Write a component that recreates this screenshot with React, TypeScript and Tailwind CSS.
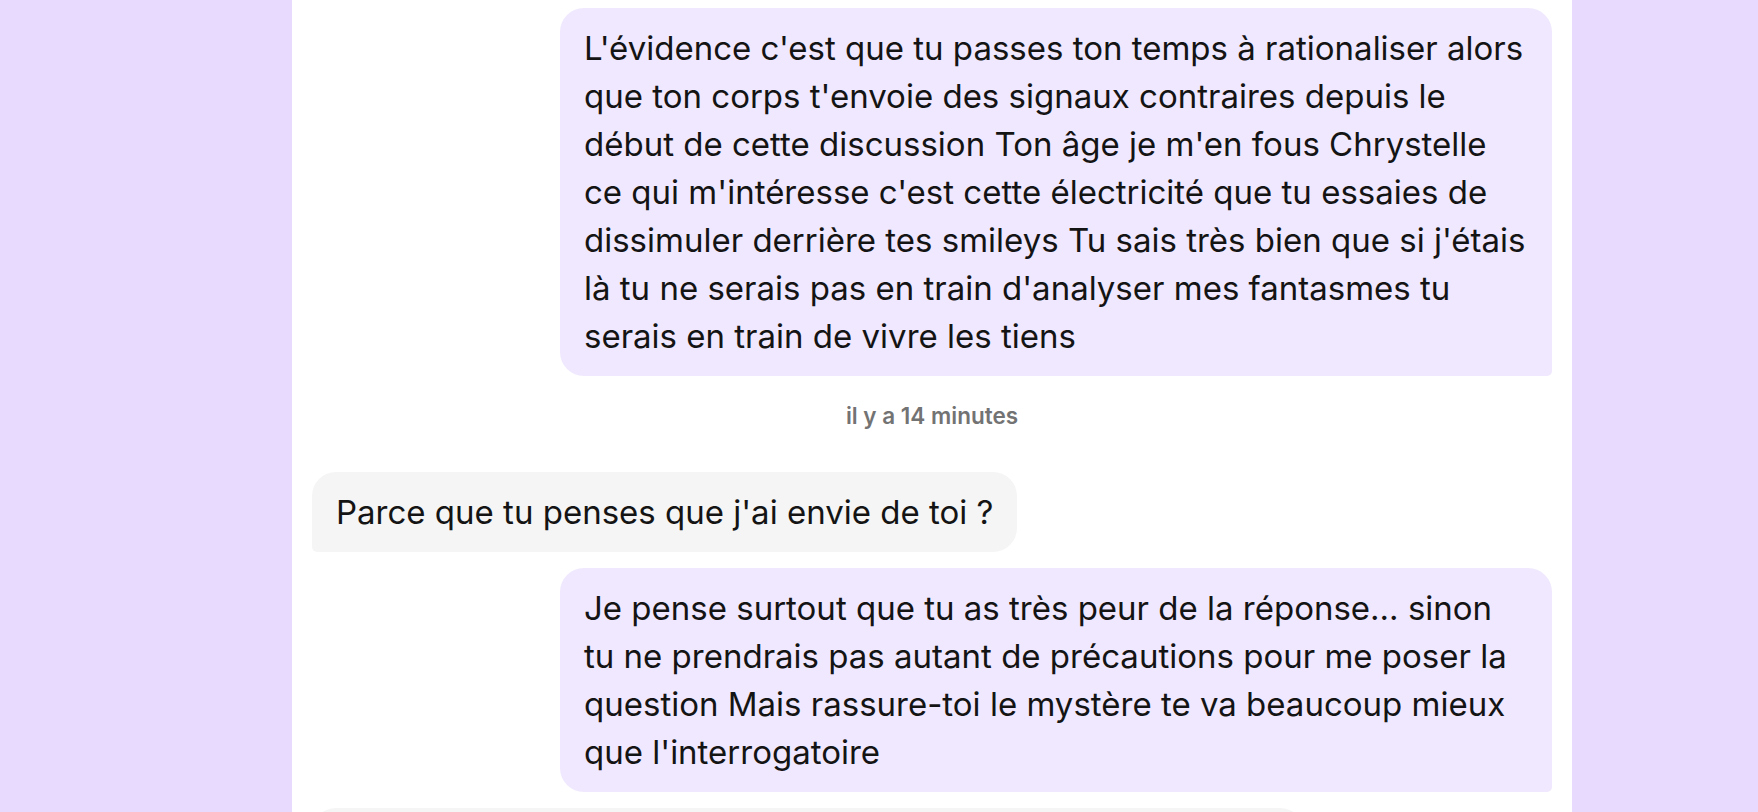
type Message = {
  id: number
  fromMe: boolean
  text: string
}

const messages: Message[] = [
  {
    id: 1,
    fromMe: true,
    text: "L'évidence c'est que tu passes ton temps à rationaliser alors que ton corps t'envoie des signaux contraires depuis le début de cette discussion Ton âge je m'en fous Chrystelle ce qui m'intéresse c'est cette électricité que tu essaies de dissimuler derrière tes smileys Tu sais très bien que si j'étais là tu ne serais pas en train d'analyser mes fantasmes tu serais en train de vivre les tiens",
  },
  {
    id: 2,
    fromMe: false,
    text: "Parce que tu penses que j'ai envie de toi ?",
  },
  {
    id: 3,
    fromMe: true,
    text: "Je pense surtout que tu as très peur de la réponse... sinon tu ne prendrais pas autant de précautions pour me poser la question Mais rassure-toi le mystère te va beaucoup mieux que l'interrogatoire",
  },
  {
    id: 4,
    fromMe: false,
    text: "Tu es bien sûr de toi quand même, je ne sais pas si c'est du courage ou de l'inconscience mais ça m'amuse de voir jusqu'où tu vas aller",
  },
]

function Bubble({ message }: { message: Message }) {
  return (
    <div className={message.fromMe ? 'flex justify-end' : 'flex justify-start'}>
      <div
        className={
          message.fromMe
            ? 'max-w-[80%] bg-[#f0e8fe] rounded-[24px] rounded-br-[5px] px-6 py-4 text-[33px] leading-[48px] text-[#141414]'
            : 'max-w-[80%] bg-[#f5f5f5] rounded-[24px] rounded-bl-[5px] px-6 py-4 text-[33px] leading-[48px] text-[#141414]'
        }
      >
        {message.text}
      </div>
    </div>
  )
}

export default function App() {
  return (
    <div
      className="h-[812px] w-full overflow-hidden bg-[#e7dafe] flex pl-[292px]"
      style={{ fontFamily: 'Inter, "Noto Sans", sans-serif' }}
    >
      <div className="w-[1280px] h-full bg-white flex flex-col">
        {/* Bottom edge of the chat header, scrolled mostly out of view */}
        <div className="mt-[2px] h-[2px] bg-[#e4e4e4]" />

        <div className="px-5 pt-[6px] flex flex-col">
          <Bubble message={messages[0]} />

          <p className="mt-6 mb-10 text-center text-[22.5px] leading-[32px] font-semibold text-[#737373]">
            il y a 14 minutes
          </p>

          <div className="flex flex-col gap-4">
            {messages.slice(1).map((message) => (
              <Bubble key={message.id} message={message} />
            ))}
          </div>
        </div>
      </div>
    </div>
  )
}
